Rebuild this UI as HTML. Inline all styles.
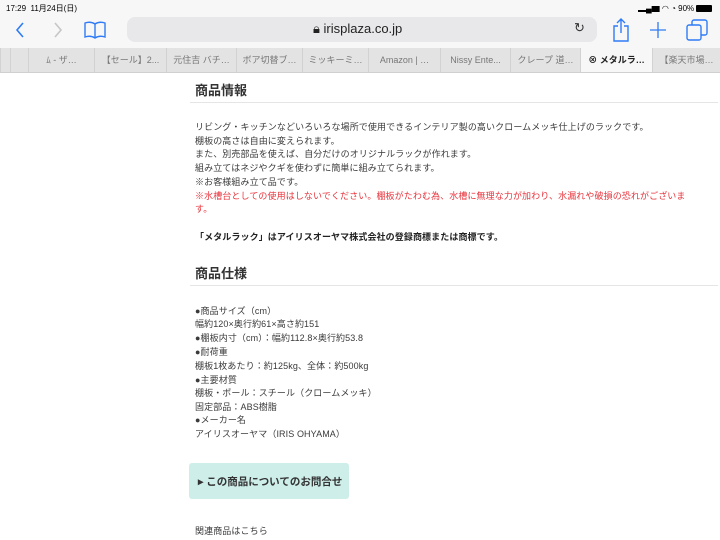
<!DOCTYPE html>
<html><head><meta charset="utf-8"><style>
*{margin:0;padding:0;box-sizing:border-box}
body{width:720px;height:540px;overflow:hidden;background:#fff;font-family:"Liberation Sans","Noto Sans CJK JP",sans-serif;color:#333;position:relative}
.abs{position:absolute}
.top{left:0;top:0;width:720px;height:48px;background:#f7f7f7}
.tabs{left:0;top:48px;width:720px;height:25px;background:#e3e3e3;border-bottom:1px solid #d0d0d0}
.tab{position:absolute;top:0;height:24px;font-size:9px;color:#777;line-height:24px;text-align:center;border-left:1px solid #d2d2d2;white-space:nowrap;overflow:hidden}
.t{position:absolute;left:195px;font-size:9px;line-height:14px;white-space:nowrap;letter-spacing:0.1px;color:#3a3a3a}
h2{position:absolute;left:195px;font-size:13px;font-weight:bold;color:#333}
.hr{position:absolute;left:190px;width:528px;height:1px;background:#e5e5e5}
</style></head><body>
<div class="abs top"></div>
<div class="abs" style="left:6px;top:3px;font-size:8px;color:#000">17:29&nbsp; 11月24日(日)</div>
<div class="abs" style="left:638px;top:3px;font-size:8px;color:#000">▂▄▆ ◠ ◔ 90% <span style="display:inline-block;width:16px;height:7px;background:#000;border-radius:1px;vertical-align:-1px"></span></div>
<svg class="abs" style="left:15px;top:22px" width="10" height="16" viewBox="0 0 10 16"><path d="M8 1L2 8l6 7" fill="none" stroke="#2f7cf6" stroke-width="1.6"/></svg>
<svg class="abs" style="left:53px;top:22px" width="10" height="16" viewBox="0 0 10 16"><path d="M2 1l6 7-6 7" fill="none" stroke="#c6c6c6" stroke-width="1.6"/></svg>
<svg class="abs" style="left:84px;top:21px" width="22" height="18" viewBox="0 0 22 18"><path d="M11 3C8 1 4 1 1 2v14c3-1 7-1 10 1c3-2 7-2 10-1V2c-3-1-7-1-10 1zM11 3v14" fill="none" stroke="#2f7cf6" stroke-width="1.4"/></svg>
<div class="abs" style="left:127px;top:17px;width:470px;height:25px;background:#e8e8ea;border-radius:8px"></div>
<div class="abs" style="left:313px;top:21px;font-size:13px;color:#222">🔒︎ irisplaza.co.jp</div>
<div class="abs" style="left:574px;top:20px;font-size:13px;color:#333">↻</div>
<svg class="abs" style="left:611px;top:18px" width="20" height="24" viewBox="0 0 20 24"><path d="M7 8H3v15h14V8h-4M10 1v14M6 5l4-4 4 4" fill="none" stroke="#2f7cf6" stroke-width="1.4"/></svg>
<svg class="abs" style="left:649px;top:21px" width="18" height="18" viewBox="0 0 18 18"><path d="M9 1v16M1 9h16" stroke="#2f7cf6" stroke-width="1.3"/></svg>
<svg class="abs" style="left:686px;top:19px" width="22" height="22" viewBox="0 0 22 22"><rect x="1" y="6" width="14" height="15" rx="2" fill="none" stroke="#2f7cf6" stroke-width="1.4"/><path d="M6 6V3a2 2 0 012-2h11a2 2 0 012 2v11a2 2 0 01-2 2h-4" fill="none" stroke="#2f7cf6" stroke-width="1.4"/></svg>
<div class="abs tabs">
<div class="tab" style="left:0;width:10px"></div>
<div class="tab" style="left:10px;width:18px"></div>
<div class="tab" style="left:28px;width:66px">ﾑ - ザ…</div>
<div class="tab" style="left:94px;width:72px">【セール】2...</div>
<div class="tab" style="left:166px;width:70px">元住吉 バチ…</div>
<div class="tab" style="left:236px;width:66px">ボア切替ブ…</div>
<div class="tab" style="left:302px;width:66px">ミッキーミ…</div>
<div class="tab" style="left:368px;width:72px">Amazon | …</div>
<div class="tab" style="left:440px;width:70px">Nissy Ente...</div>
<div class="tab" style="left:510px;width:70px">クレープ 道…</div>
<div class="tab" style="left:580px;width:72px;background:#f7f7f7;color:#222;font-weight:bold">⊗ メタルラ…</div>
<div class="tab" style="left:652px;width:68px">【楽天市場…</div>
</div>
<h2 style="top:80px">商品情報</h2>
<div class="hr" style="top:102px"></div>
<div class="t" style="top:120px">リビング・キッチンなどいろいろな場所で使用できるインテリア製の高いクロームメッキ仕上げのラックです。</div>
<div class="t" style="top:134px">棚板の高さは自由に変えられます。</div>
<div class="t" style="top:147px">また、別売部品を使えば、自分だけのオリジナルラックが作れます。</div>
<div class="t" style="top:161px">組み立てはネジやクギを使わずに簡単に組み立てられます。</div>
<div class="t" style="top:175px">※お客様組み立て品です。</div>
<div class="t" style="top:189px;color:#e8343c">※水槽台としての使用はしないでください。棚板がたわむ為、水槽に無理な力が加わり、水漏れや破損の恐れがございま</div>
<div class="t" style="top:202px;color:#e8343c">す。</div>
<div class="t" style="top:230px;font-weight:bold;color:#222">「メタルラック」はアイリスオーヤマ株式会社の登録商標または商標です。</div>
<h2 style="top:263px">商品仕様</h2>
<div class="hr" style="top:285px"></div>
<div class="t" style="top:304px">●商品サイズ（cm）</div>
<div class="t" style="top:317px">幅約120×奥行約61×高さ約151</div>
<div class="t" style="top:331px">●棚板内寸（cm）：幅約112.8×奥行約53.8</div>
<div class="t" style="top:345px">●耐荷重</div>
<div class="t" style="top:359px">棚板1枚あたり：約125kg、全体：約500kg</div>
<div class="t" style="top:373px">●主要材質</div>
<div class="t" style="top:386px">棚板・ポール：スチール（クロームメッキ）</div>
<div class="t" style="top:400px">固定部品：ABS樹脂</div>
<div class="t" style="top:413px">●メーカー名</div>
<div class="t" style="top:427px">アイリスオーヤマ（IRIS OHYAMA）</div>
<div class="abs" style="left:189px;top:463px;width:160px;height:36px;background:#cdeee9;border-radius:3px"></div>
<div class="abs" style="left:198px;top:474px;font-size:10.5px;font-weight:bold;color:#333">▸ この商品についてのお問合せ</div>
<div class="t" style="top:524px">関連商品はこちら</div>
</body></html>
